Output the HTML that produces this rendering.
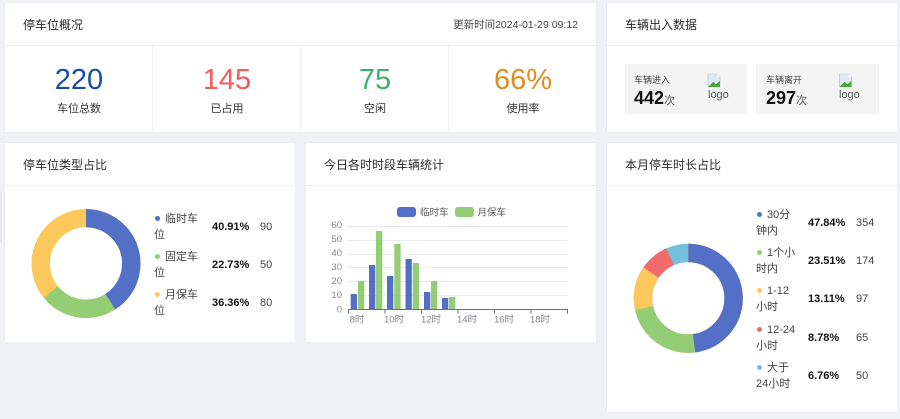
<!DOCTYPE html>
<html lang="zh">
<head>
<meta charset="utf-8">
<style>
html,body{margin:0;padding:0}
body{width:900px;height:419px;background:#eff1f5;overflow:hidden;position:relative;font-family:"Liberation Sans","Noto Sans CJK SC",sans-serif;color:#333}
.card{position:absolute;background:#fff;box-shadow:0 0 1px #dfe1e6;filter:blur(.25px)}
.t{position:absolute;white-space:nowrap;line-height:16px}
.title{font-size:12px;left:18px;top:14px;color:#2b2b2b}
.hr{position:absolute;left:0;right:0;top:42px;height:1px;background:#eceef2}
.vr{position:absolute;top:43px;bottom:0;width:1px;background:#f0f1f4}
.num{font-size:29px;line-height:36px;text-align:center;width:148px;font-family:"Liberation Sans","Noto Sans CJK SC",sans-serif}
.lab{font-size:11px;text-align:center;width:148px}
.box{position:absolute;background:#f4f4f5;top:61px;height:50px}
.l{font-size:11px;color:#444}
.p{font-size:11px;font-weight:bold;color:#111}
.d{position:absolute;width:5px;height:5px;border-radius:50%}
svg{position:absolute;left:0;top:0}
</style>
</head>
<body>
<div style="position:absolute;left:0;top:192px;width:2px;height:50px;background:#e6e7eb"></div>

<div class="card" style="left:5px;top:3px;width:591px;height:129px">
  <div class="t title">停车位概况</div>
  <div class="t" style="right:18px;top:14px;font-size:10.5px;color:#444">更新时间2024-01-29 09:12</div>
  <div class="hr"></div>
  <div class="vr" style="left:147px"></div>
  <div class="vr" style="left:295px"></div>
  <div class="vr" style="left:443px"></div>
  <div class="t num" style="left:0;top:59px;color:#1a4ba8">220</div>
  <div class="t lab" style="left:0;top:98px">车位总数</div>
  <div class="t num" style="left:148px;top:59px;color:#f85a5e">145</div>
  <div class="t lab" style="left:148px;top:98px">已占用</div>
  <div class="t num" style="left:296px;top:59px;color:#3fb069">75</div>
  <div class="t lab" style="left:296px;top:98px">空闲</div>
  <div class="t num" style="left:444px;top:59px;color:#dd8e25">66%</div>
  <div class="t lab" style="left:444px;top:98px">使用率</div>
</div>

<div class="card" style="left:607px;top:3px;width:290px;height:129px">
  <div class="t title">车辆出入数据</div>
  <div class="hr"></div>
  <div class="box" style="left:18px;width:122px"></div>
  <div class="box" style="left:149px;width:123px"></div>
  <div class="t" style="left:27px;top:69px;font-size:9px;color:#444">车辆进入</div>
  <div class="t" style="left:27px;top:85px;font-size:18px;line-height:20px;font-weight:bold;color:#111">442<span style="font-size:11px;font-weight:normal;color:#555">次</span></div>
  <div class="t" style="left:159px;top:69px;font-size:9px;color:#444">车辆离开</div>
  <div class="t" style="left:159px;top:85px;font-size:18px;line-height:20px;font-weight:bold;color:#111">297<span style="font-size:11px;font-weight:normal;color:#555">次</span></div>
  <svg width="290" height="129" viewBox="0 0 290 129">
    <g>
      <path d="M101 71h9l3 3v10h-12z" fill="#dfe8f5" stroke="#b5bccb" stroke-width=".6"/>
      <path d="M101 84l5-5 3 2 4-3v6z" fill="#4aa53c"/>
      <path d="M110 71v3h3z" fill="#fff"/>
    </g>
    <g transform="translate(131.5 0)">
      <path d="M101 71h9l3 3v10h-12z" fill="#dfe8f5" stroke="#b5bccb" stroke-width=".6"/>
      <path d="M101 84l5-5 3 2 4-3v6z" fill="#4aa53c"/>
      <path d="M110 71v3h3z" fill="#fff"/>
    </g>
  </svg>
  <div class="t" style="left:101px;top:84px;font-size:11px;color:#555">logo</div>
  <div class="t" style="left:232px;top:84px;font-size:11px;color:#555">logo</div>
</div>

<div class="card" style="left:5px;top:143px;width:290px;height:199px">
  <div class="t title">停车位类型占比</div>
  <div class="hr"></div>
  <svg width="290" height="199" viewBox="0 0 290 199">
    <g fill="none" stroke-width="18.4" transform="rotate(-90 81 120.5)">
      <circle cx="81" cy="120.5" r="45.3" stroke="#fdc85b" />
      <circle cx="81" cy="120.5" r="45.3" stroke="#93cd76" stroke-dasharray="182.2 284.6"/>
      <circle cx="81" cy="120.5" r="45.3" stroke="#5470c6" stroke-dasharray="116.4 284.6"/>
    </g>
  </svg>
  <i class="d" style="left:149.500px;top:72.500px;background:#5470c6"></i>
  <div class="t l" style="left:160px;top:68px">临时车</div>
  <div class="t l" style="left:149px;top:84px">位</div>
  <div class="t p" style="left:207px;top:76px">40.91%</div>
  <div class="t l" style="left:255px;top:76px">90</div>
  <i class="d" style="left:149.500px;top:111px;background:#93cd76"></i>
  <div class="t l" style="left:160px;top:106px">固定车</div>
  <div class="t l" style="left:149px;top:122px">位</div>
  <div class="t p" style="left:207px;top:114px">22.73%</div>
  <div class="t l" style="left:255px;top:114px">50</div>
  <i class="d" style="left:149.500px;top:149px;background:#fdc85b"></i>
  <div class="t l" style="left:160px;top:144px">月保车</div>
  <div class="t l" style="left:149px;top:160px">位</div>
  <div class="t p" style="left:207px;top:152px">36.36%</div>
  <div class="t l" style="left:255px;top:152px">80</div>
</div>

<div class="card" style="left:306px;top:143px;width:290px;height:199px">
  <div class="t title">今日各时时段车辆统计</div>
  <div class="hr"></div>
  <svg width="290" height="199" viewBox="306 143 290 199" font-family="Liberation Sans,Noto Sans CJK SC,sans-serif" font-size="9.500" fill="#85878f">
    <g stroke="#e9ebf1" stroke-width="1">
      <path d="M348 226.500H568M348 240.500H568M348 254.500H568M348 267.500H568M348 281.500H568M348 295.500H568"/>
    </g>
    <g fill="#5470c6">
      <rect x="397" y="207" width="19" height="10" rx="3"/>
      <rect x="350.700" y="294" width="6.300" height="15"/>
      <rect x="369" y="265" width="6.300" height="44"/>
      <rect x="387" y="276" width="6.300" height="33"/>
      <rect x="405.500" y="259" width="6.300" height="50"/>
      <rect x="424" y="292" width="6.300" height="17"/>
      <rect x="442" y="298" width="6.300" height="11"/>
    </g>
    <g fill="#93cd76">
      <rect x="455" y="207" width="19" height="10" rx="3"/>
      <rect x="358" y="281" width="6.300" height="28"/>
      <rect x="376" y="231" width="6.300" height="78"/>
      <rect x="394.300" y="244" width="6.300" height="65"/>
      <rect x="412.700" y="263" width="6.300" height="46"/>
      <rect x="431" y="281" width="6.300" height="28"/>
      <rect x="449" y="297" width="6.300" height="12"/>
    </g>
    <path d="M348.500 313.500V309.500H567.500V313.500M385 309.500V313.500M421.500 309.500V313.500M458 309.500V313.500M494.500 309.500V313.500M531 309.500V313.500" fill="none" stroke="#6e7079" stroke-width="1"/>
    <g text-anchor="end">
      <text x="342" y="228">60</text><text x="342" y="242">50</text><text x="342" y="256">40</text><text x="342" y="270">30</text><text x="342" y="284">20</text><text x="342" y="298">10</text><text x="342" y="312.500">0</text>
    </g>
    <g text-anchor="middle">
      <text x="357" y="322.500">8时</text><text x="394" y="322.500">10时</text><text x="431" y="322.500">12时</text><text x="467" y="322.500">14时</text><text x="504" y="322.500">16时</text><text x="540" y="322.500">18时</text>
    </g>
    <text x="420" y="215.500" fill="#555">临时车</text>
    <text x="477.500" y="215.500" fill="#555">月保车</text>
  </svg>
</div>

<div class="card" style="left:607px;top:143px;width:290px;height:269px">
  <div class="t title">本月停车时长占比</div>
  <div class="hr"></div>
  <svg width="290" height="269" viewBox="0 0 290 269">
    <g fill="none" stroke-width="18.4" transform="rotate(-90 81.300 155.300)">
      <circle cx="81.300" cy="155.300" r="45.300" stroke="#73c0de"/>
      <circle cx="81.300" cy="155.300" r="45.300" stroke="#f16b6b" stroke-dasharray="265.400 284.600"/>
      <circle cx="81.300" cy="155.300" r="45.300" stroke="#fdc85b" stroke-dasharray="240.400 284.600"/>
      <circle cx="81.300" cy="155.300" r="45.300" stroke="#93cd76" stroke-dasharray="203.200 284.600"/>
      <circle cx="81.300" cy="155.300" r="45.300" stroke="#5470c6" stroke-dasharray="136.200 284.600"/>
    </g>
  </svg>
  <i class="d" style="left:149.500px;top:69px;background:#5470c6"></i>
  <div class="t l" style="left:160px;top:64px">30分</div>
  <div class="t l" style="left:149px;top:80px">钟内</div>
  <div class="t p" style="left:201px;top:72px">47.84%</div>
  <div class="t l" style="left:249px;top:72px">354</div>
  <i class="d" style="left:149.500px;top:107px;background:#93cd76"></i>
  <div class="t l" style="left:160px;top:102px">1个小</div>
  <div class="t l" style="left:149px;top:118px">时内</div>
  <div class="t p" style="left:201px;top:110px">23.51%</div>
  <div class="t l" style="left:249px;top:110px">174</div>
  <i class="d" style="left:149.500px;top:145px;background:#fdc85b"></i>
  <div class="t l" style="left:160px;top:140px">1-12</div>
  <div class="t l" style="left:149px;top:156px">小时</div>
  <div class="t p" style="left:201px;top:148px">13.11%</div>
  <div class="t l" style="left:249px;top:148px">97</div>
  <i class="d" style="left:149.500px;top:184px;background:#f16b6b"></i>
  <div class="t l" style="left:160px;top:179px">12-24</div>
  <div class="t l" style="left:149px;top:195px">小时</div>
  <div class="t p" style="left:201px;top:187px">8.78%</div>
  <div class="t l" style="left:249px;top:187px">65</div>
  <i class="d" style="left:149.500px;top:222px;background:#73c0de"></i>
  <div class="t l" style="left:160px;top:217px">大于</div>
  <div class="t l" style="left:149px;top:233px">24小时</div>
  <div class="t p" style="left:201px;top:225px">6.76%</div>
  <div class="t l" style="left:249px;top:225px">50</div>
</div>
</body>
</html>
